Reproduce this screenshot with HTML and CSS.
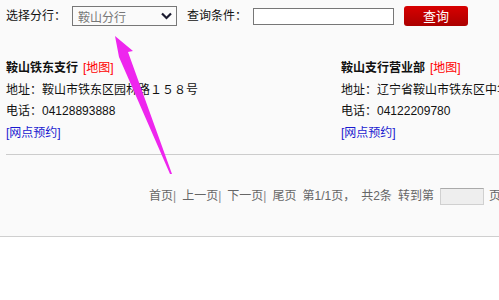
FILE: index.html
```html
<!DOCTYPE html>
<html lang="zh-CN">
<head>
<meta charset="utf-8">
<title>网点查询</title>
<link rel="stylesheet" href="styles.css">
</head>
<body>
<div class="wrap">
  <form class="search">
    <label class="lbl">选择分行：</label>
    <div class="select">
      <span class="select-text">鞍山分行</span>
      <svg class="chev" width="11" height="8" viewBox="0 0 11 8"><path d="M1 1.5 L5.5 6 L10 1.5" fill="none" stroke="#1a1a2e" stroke-width="2.2"/></svg>
    </div>
    <label class="lbl lbl2">查询条件：</label>
    <input class="cond" type="text">
    <button class="btn" type="button">查询</button>
  </form>

  <div class="cards">
    <div class="card">
      <div class="title"><b>鞍山铁东支行</b><a class="map">[地图]</a></div>
      <div class="line">地址：鞍山市铁东区园林路１５８号</div>
      <div class="line">电话：<span class="num">04128893888</span></div>
      <div class="line"><a class="book">[网点预约]</a></div>
    </div>
    <div class="card">
      <div class="title"><b>鞍山支行营业部</b><a class="map">[地图]</a></div>
      <div class="line">地址：辽宁省鞍山市铁东区中华路１号</div>
      <div class="line">电话：<span class="num">04122209780</span></div>
      <div class="line"><a class="book">[网点预约]</a></div>
    </div>
  </div>

  <div class="sep"></div>

  <div class="pager">
    <span>首页<i>|</i></span>
    <span>上一页<i>|</i></span>
    <span>下一页<i>|</i></span>
    <span>尾页</span>
    <span>第<em>1/1</em>页，</span>
    <span>共<em>2</em>条</span>
    <span>转到第</span>
    <input class="goto" type="text">
    <span>页</span>
  </div>
</div>

<svg class="arrow" width="499" height="300" viewBox="0 0 499 300">
  <polygon points="115,36 133,51 128,52 172,174 170,174 119,57" fill="#ee26ee"/>
</svg>
</body>
</html>
```

FILE: styles.css
```css
html { overflow: hidden; }
body {
  margin: 0;
  background: #ffffff;
  font-family: "Liberation Sans", "Noto Sans CJK SC", sans-serif;
  font-size: 12px;
  color: #111;
}
.wrap {
  background: #fafafa;
  height: 236px;
  border-bottom: 1px solid #cfcfcf;
  white-space: nowrap;
}
.search {
  display: flex;
  align-items: center;
  height: 32px;
  padding: 0 0 0 6px;
  margin: 0;
}
.lbl { width: 60px; margin-right: 6px; line-height: 20px; }
.lbl2 { margin-left: 10px; }
.select {
  position: relative;
  box-sizing: border-box;
  width: 105px;
  height: 20px;
  border: 1px solid #777;
  background: #fafafa;
  display: flex;
  align-items: center;
  padding-left: 5px;
  color: #777;
}
.chev { position: absolute; right: 4px; top: 5px; }
.cond {
  box-sizing: border-box;
  width: 141px;
  height: 17px;
  border: 1px solid #777;
  background: #fff;
  margin: 0;
  padding: 0;
}
.btn {
  box-sizing: border-box;
  width: 64px;
  height: 20px;
  margin: 0 0 0 10px;
  padding: 0;
  border: none;
  border-radius: 3px;
  background: linear-gradient(#d80000, #ab0000);
  color: #fff;
  font-family: "Noto Sans CJK SC", sans-serif;
  font-size: 13px;
  line-height: 20px;
}
.cards {
  display: flex;
  padding: 26px 0 0 6px;
}
.card { flex: 0 0 335px; }
.title, .line { line-height: 21.6px; height: 21.6px; }
.title b { font-weight: bold; color: #111; }
.map { color: #f00; margin-left: 5px; }
.book { color: #1a1ad0; }
.sep {
  margin: 10px 0 0 6px;
  border-top: 1px solid #cccccc;
}
.pager {
  display: flex;
  align-items: center;
  gap: 6px;
  padding: 31px 0 0 149px;
  color: #666;
  line-height: 20px;
}
.pager i { font-style: normal; color: #888; }
.pager em { font-style: normal; }
.goto {
  box-sizing: border-box;
  width: 44px;
  height: 17px;
  margin: 0 -1px 0 0;
  border: 1px solid #d0d0d0;
  border-top-color: #aaa;
  background: #eeeeee;
  padding: 0;
}
.arrow { position: absolute; left: 0; top: 0; pointer-events: none; }
```
